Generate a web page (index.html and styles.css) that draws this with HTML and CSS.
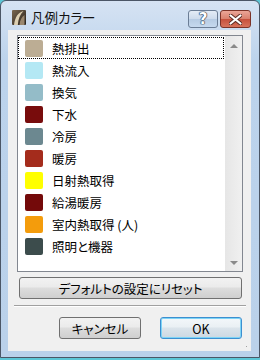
FILE: index.html
```html
<!DOCTYPE html>
<html lang="ja">
<head>
    <meta charset="UTF-8">
    <meta name="viewport" content="width=device-width, initial-scale=1.0">
    <title>凡例カラー</title>
    <link rel="stylesheet" href="styles.css">
</head>
<body>
    <div class="window">
        <div class="titlebar">
            <svg class="app-icon" width="14" height="15" viewBox="0 0 14 15">
                <defs>
                    <linearGradient id="ig" x1="0" y1="0" x2="1" y2="1">
                        <stop offset="0" stop-color="#7a6850"/>
                        <stop offset="1" stop-color="#241f1a"/>
                    </linearGradient>
                </defs>
                <rect width="14" height="15" rx="1" fill="url(#ig)"/>
                <path d="M2 15 C3 7 6 2.5 11.5 1 C8 4.5 6.2 9 5.8 15 Z" fill="#ddd0b2"/>
                <path d="M7.5 15 C8 10 9.5 7 12.5 5 L12.5 15 Z" fill="#9a876e"/>
            </svg>
            <span class="title">凡例カラー</span>
            <div class="caption-btns">
                <div class="cap help">?</div>
                <div class="cap close">
                    <svg width="13" height="11" viewBox="0 0 13 11">
                        <path d="M1.5 1.5 L11.5 9.5 M11.5 1.5 L1.5 9.5" stroke="#5a2a22" stroke-width="4" stroke-linecap="round"/>
                        <path d="M1.5 1.5 L11.5 9.5 M11.5 1.5 L1.5 9.5" stroke="#fff" stroke-width="2.2" stroke-linecap="round"/>
                    </svg>
                </div>
            </div>
        </div>

        <div class="client">
            <div class="listbox">
                <ul class="items">
                    <li class="item focused"><span class="swatch" style="background:#bcad94"></span>熱排出</li>
                    <li class="item"><span class="swatch" style="background:#b4e8f4"></span>熱流入</li>
                    <li class="item"><span class="swatch" style="background:#94bcc8"></span>換気</li>
                    <li class="item"><span class="swatch" style="background:#780c0c"></span>下水</li>
                    <li class="item"><span class="swatch" style="background:#6c8890"></span>冷房</li>
                    <li class="item"><span class="swatch" style="background:#a42c1c"></span>暖房</li>
                    <li class="item"><span class="swatch" style="background:#ffff00"></span>日射熱取得</li>
                    <li class="item"><span class="swatch" style="background:#740a0a"></span>給湯暖房</li>
                    <li class="item"><span class="swatch" style="background:#f49c0c"></span>室内熱取得 (人)</li>
                    <li class="item"><span class="swatch" style="background:#3c4c4c"></span>照明と機器</li>
                </ul>
                <div class="scrollbar">
                    <span class="arrow up"></span>
                    <span class="arrow down"></span>
                </div>
            </div>

            <button class="btn reset">デフォルトの設定にリセット</button>
            <div class="sep"></div>

            <div class="actions">
                <button class="btn">キャンセル</button>
                <button class="btn default">OK</button>
            </div>
            <div class="grip"></div>
        </div>
    </div>
</body>
</html>
```

FILE: styles.css
```css
body {
    margin: 0;
    background-color: #5cc6d6;
    font-family: "Noto Sans CJK JP", "Noto Sans", sans-serif;
    font-feature-settings: "palt";
}
.window {
    width: 260px;
    height: 358px;
    box-sizing: border-box;
    border: 1px solid #4b5666;
    border-radius: 6px 6px 0 0;
    background: linear-gradient(#d6e3f3, #bcd3ec 60px, #bad1ea);
    display: flex;
    flex-direction: column;
    padding: 0 8px 6px 7px;
}
.titlebar {
    height: 29px;
    display: flex;
    align-items: center;
}
.app-icon {
    margin: 3px 0 0 4px;
}
.title {
    margin-left: 5px;
    margin-top: 3px;
    font-size: 13.5px;
    color: #111;
}
.caption-btns {
    margin-left: auto;
    display: flex;
    gap: 2px;
    align-self: flex-start;
    margin-top: 9px;
}
.cap {
    height: 18px;
    box-sizing: border-box;
    border-radius: 3px;
    display: flex;
    align-items: center;
    justify-content: center;
}
.help {
    width: 30px;
    border: 1px solid #6b7d95;
    background: linear-gradient(#e4ecf6, #cddbec 50%, #b6cbe3 51%, #c6d9ee);
    color: #fff;
    font-family: "DejaVu Sans", sans-serif;
    font-weight: bold;
    font-size: 15px;
    line-height: 1;
    text-shadow: 0 0 1px #2a3a50, 0 0 1px #2a3a50, 0 0 1px #2a3a50, 0 0 1px #2a3a50;
}
.close {
    width: 31px;
    border: 1px solid #7c3328;
    background: linear-gradient(#eba597, #d9806d 50%, #c6503c 51%, #d7735c);
}
.client {
    flex: 1;
    background-color: #f0f0f0;
    position: relative;
    display: flex;
    flex-direction: column;
}
.listbox {
    margin: 5px 8px 0 9px;
    height: 237px;
    box-sizing: border-box;
    border: 1px solid #828790;
    background-color: #fff;
    display: flex;
}
.items {
    list-style: none;
    margin: 0;
    padding: 1px 0 0 0;
    flex: 1;
}
.item {
    height: 22px;
    box-sizing: border-box;
    display: flex;
    align-items: center;
    font-size: 12.5px;
    color: #000;
    padding-left: 6px;
    border: 1px solid transparent;
    margin-right: 1px;
}
.item.focused {
    border: 1px dotted #000;
}
.swatch {
    width: 18px;
    height: 17px;
    border-radius: 2px;
    margin-right: 9px;
}
.scrollbar {
    width: 17px;
    background: linear-gradient(90deg, #e6e6e6, #f0f0f0);
    display: flex;
    flex-direction: column;
    justify-content: space-between;
    align-items: center;
    padding: 8px 0 6px;
}
.arrow {
    width: 0;
    height: 0;
    border-left: 4px solid transparent;
    border-right: 4px solid transparent;
}
.arrow.up {
    border-bottom: 4px solid #8a8a8a;
}
.arrow.down {
    border-top: 4px solid #8a8a8a;
}
.btn {
    font-family: inherit;
    font-feature-settings: "palt";
    font-size: 12.5px;
    color: #000;
    height: 22px;
    border: 1px solid #707070;
    border-radius: 3px;
    background: linear-gradient(#f2f2f2, #ebebeb 45%, #dddddd 50%, #cfcfcf);
    padding: 0;
}
.reset {
    margin: 5px 9px 0 11px;
}
.sep {
    margin: 6px 5px 0 6px;
    height: 1px;
    background-color: #a0a0a0;
    border-bottom: 1px solid #fff;
}
.actions {
    display: flex;
    justify-content: flex-end;
    gap: 19px;
    margin: 10px 9px 0 0;
}
.actions .btn {
    width: 82px;
}
.btn.default {
    border-color: #3c8fd0;
    box-shadow: inset 0 0 0 1px #7ed4f6;
    background: linear-gradient(#f3f7fa, #eaf0f4 45%, #dbe4eb 50%, #ccd8e2);
}
.grip {
    position: absolute;
    right: 2px;
    bottom: 2px;
    width: 7px;
    height: 7px;
    background: radial-gradient(circle, #a0a0a0 0.8px, transparent 1px) 0 0 / 3px 3px;
    clip-path: polygon(100% 0, 100% 100%, 0 100%);
}
```
